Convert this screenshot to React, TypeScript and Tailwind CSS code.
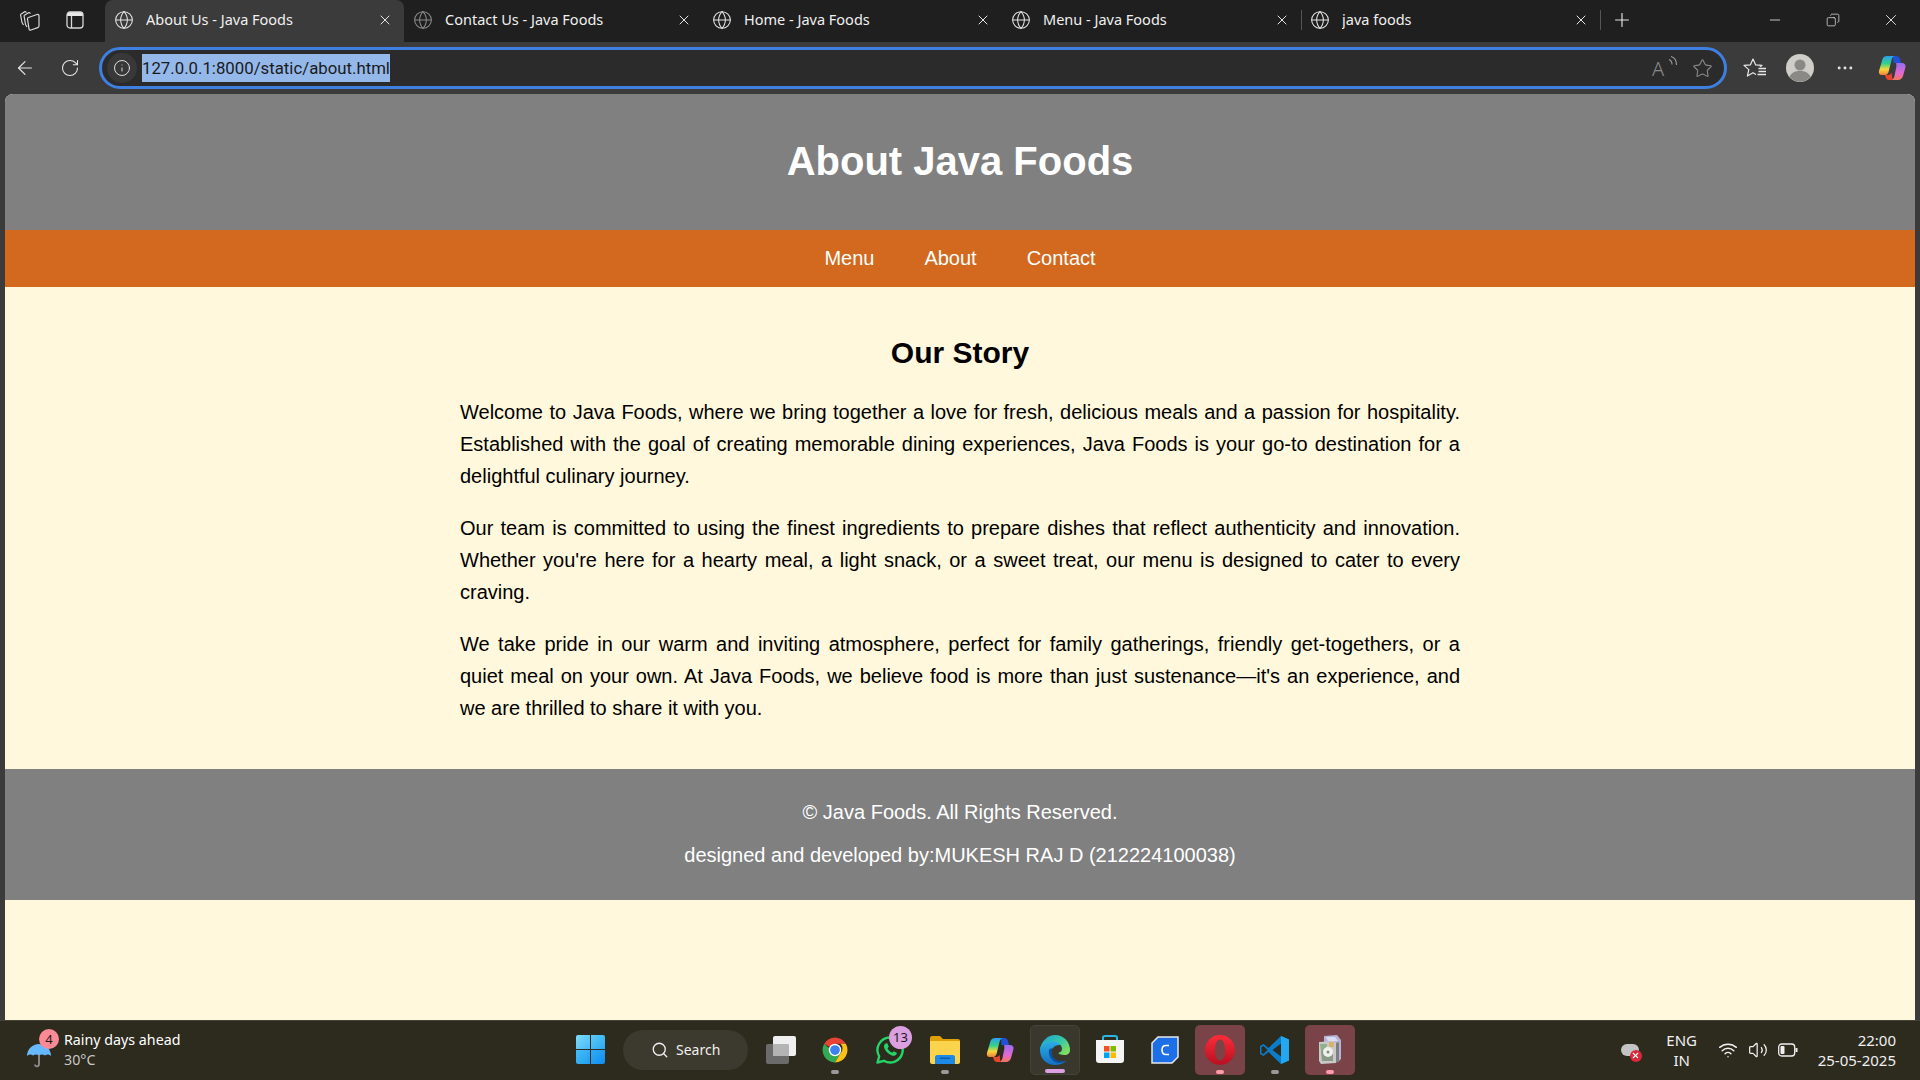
import { ArrowLeft, Globe, Info, Minus, Plus, RotateCw, Search, Star, Volume2, Wifi, X, MoreHorizontal, Copy } from 'lucide-react';

const segoe = { fontFamily: '"Noto Sans", sans-serif' };

const tabs = [
  { title: 'About Us - Java Foods', active: true },
  { title: 'Contact Us - Java Foods', dim: true },
  { title: 'Home - Java Foods' },
  { title: 'Menu - Java Foods' },
  { title: 'java foods', sep: true, sepRight: true },
];

const paragraphs = [
  'Welcome to Java Foods, where we bring together a love for fresh, delicious meals and a passion for hospitality. Established with the goal of creating memorable dining experiences, Java Foods is your go-to destination for a delightful culinary journey.',
  "Our team is committed to using the finest ingredients to prepare dishes that reflect authenticity and innovation. Whether you're here for a hearty meal, a light snack, or a sweet treat, our menu is designed to cater to every craving.",
  "We take pride in our warm and inviting atmosphere, perfect for family gatherings, friendly get-togethers, or a quiet meal on your own. At Java Foods, we believe food is more than just sustenance\u2014it's an experience, and we are thrilled to share it with you.",
];

const WorkspaceIcon = () => (
  <svg width="22" height="22" viewBox="0 0 22 22" fill="none" stroke="#d8d8d8" strokeWidth="1.2" strokeLinejoin="round">
    <path d="M1.500 5.500 6 2.500l1.500 1M1.500 5.500 3 13.500l1.500 2.500" />
    <path d="M5 6.500 10 3.500l1.500 1M5 6.500 6.500 15.500l1.500 2.500" />
    <path d="M9.500 8.500 18 5.500c1-.3 2 .2 2 1.300v10c0 1-.5 1.500-1.300 1.800l-6.700 2.400c-1 .3-1.800-.2-2-1.200L8.500 10c-.1-.7.300-1.300 1-1.500z" />
  </svg>
);

const TabViewIcon = () => (
  <svg width="18" height="18" viewBox="0 0 18 18" fill="none" stroke="#d8d8d8" strokeWidth="1.300">
    <path d="M1 5V3.500C1 2 2 1 3.500 1h11C16 1 17 2 17 3.500V5z" fill="#e8e8e8" stroke="none" />
    <rect x="1" y="1" width="16" height="16" rx="3" />
    <path d="M5.500 5v12" />
  </svg>
);

const ReadAloud = () => (
  <div className="relative w-[24px] h-[24px] text-[#8a8a8a]">
    <span className="absolute left-0 top-[1px] text-[20px] font-light leading-[24px]" style={segoe}>A</span>
    <svg className="absolute right-[-3px] top-0" width="11" height="13" viewBox="0 0 11 13" fill="none" stroke="#9a9a9a" strokeWidth="1.100">
      <path d="M1 3.500c2 .8 3 2.500 3 5M3 .5C6.500 1.500 8.500 4.500 8.500 9" />
    </svg>
  </div>
);

const FavoritesIcon = () => (
  <svg width="24" height="22" viewBox="0 0 24 22" fill="none" stroke="#e8e8e8" strokeWidth="1.200" strokeLinejoin="round">
    <path d="M10 2l2.600 5.800 6.400.6-4.800 4.200 1.400 6.400L10 15.700l-5.600 3.300 1.400-6.400L1 8.400l6.400-.6z" />
    <rect x="13" y="10" width="10" height="10" fill="#3b3b3b" stroke="none" />
    <path d="M15.500 11.500H23M15.500 14.500H23M14.500 17.500H23" strokeWidth="1.300" />
  </svg>
);

const Avatar = () => (
  <svg width="28" height="28" viewBox="0 0 28 28">
    <circle cx="14" cy="14" r="14" fill="#cfcdc8" />
    <circle cx="14" cy="11" r="5.500" fill="#8b8986" />
    <path d="M3.500 23c2-5 6-6 10.500-6s8.500 1 10.500 6a14 14 0 0 1-21 0z" fill="#8b8986" />
  </svg>
);

const CopilotIcon = ({ id = 'cp' }: { id?: string }) => (
  <svg width="28" height="28" viewBox="0 0 28 28">
    <defs>
      <linearGradient id={`${id}a`} x1="0" y1="0" x2="0" y2="1">
        <stop offset="0" stopColor="#2a9ff0" />
        <stop offset="0.4" stopColor="#35d08a" />
        <stop offset="0.7" stopColor="#f7d83a" />
        <stop offset="1" stopColor="#f0803a" />
      </linearGradient>
      <linearGradient id={`${id}b`} x1="0" y1="0" x2="0" y2="1">
        <stop offset="0" stopColor="#9a6cf0" />
        <stop offset="0.6" stopColor="#e468d0" />
        <stop offset="1" stopColor="#f2785a" />
      </linearGradient>
    </defs>
    <path d="M15 2h3c2 0 3.500 1 4 3l1 4h-7.500z" fill="#2350d8" />
    <path d="M9 2h7.500c-1.500.5-2.500 2-3 4l-3 12c-.4 1.500-1.500 3-3.500 3H3.500C1.500 21 .300 19 1 17L4.500 5C5.200 3 7 2 9 2z" fill={`url(#${id}a)`} />
    <path d="M18 9h6c2.500 0 4 2 3.500 4l-2.500 9c-.6 2-2.300 4-5 4h-7c2-.5 3-2 3.500-4l1.800-9c.3-1.800 0-3 -.3-4z" fill={`url(#${id}b)`} />
    <path d="M7 21h3.500c1.500-.2 2.500-1.200 3-2.500l1 7.500h-3.500c-2 0-3.500-2-4-5z" fill="#e8452f" />
  </svg>
);

const WinLogo = () => (
  <div className="grid grid-cols-2 gap-[1.500px] w-[29px] h-[29px]">
    <div className="bg-gradient-to-br from-[#7ddcfb] to-[#45b8f5] rounded-tl-[2px]" />
    <div className="bg-gradient-to-br from-[#5accf8] to-[#2aa8f5] rounded-tr-[2px]" />
    <div className="bg-gradient-to-br from-[#45bdf7] to-[#209ff0] rounded-bl-[2px]" />
    <div className="bg-gradient-to-br from-[#30abf7] to-[#0e8df0] rounded-br-[2px]" />
  </div>
);

const TaskView = () => (
  <div className="relative w-[30px] h-[28px]">
    <div className="absolute left-0 bottom-0 w-[23px] h-[20px] rounded-[2px] bg-[#6b6b6b]" />
    <div className="absolute right-0 top-0 w-[23px] h-[20px] rounded-[2px] bg-[#efefef]" />
    <div className="absolute left-[7px] top-[8px] w-[16px] h-[12px] rounded-[1px] bg-[#b4b4b4]" />
  </div>
);

const Chrome = () => (
  <svg width="30" height="30" viewBox="0 0 48 48">
    <path d="M24 24 6.700 14A20 20 0 0 1 41.300 14H24z" fill="#ea4335" />
    <path d="M6.700 14A20 20 0 0 0 24 44l8.700-15H24z" fill="#34a853" />
    <path d="M41.300 14A20 20 0 0 1 24 44l8.700-15a10 10 0 0 0 0-15z" fill="#fbc116" />
    <circle cx="24" cy="24" r="10" fill="#fff" />
    <circle cx="24" cy="24" r="7.800" fill="#3b82f0" />
  </svg>
);

const WhatsApp = () => (
  <svg width="30" height="30" viewBox="0 0 30 30" fill="none">
    <path d="M15 2.500A12.500 12.500 0 0 0 4.200 21.300L2.500 27.500l6.400-1.700A12.500 12.500 0 1 0 15 2.500z" stroke="#25d366" strokeWidth="2.400" strokeLinejoin="round" />
    <path d="M10.500 8.500c-1.500 1-2 2.800-1 5 1.300 3 3.700 5.500 6.800 6.800 2.200 1 4 .5 5-.8.600-.8.600-1.500.4-1.800l-3-1.500-1.400 1.600c-2-.8-3.800-2.500-4.800-4.600l1.300-1.400-1.300-3.200c-.8-.3-1.500-.4-2 0z" fill="#25d366" />
  </svg>
);

const Folder = () => (
  <svg width="30" height="28" viewBox="0 0 30 28">
    <path d="M0 2c0-1 .8-2 2-2h8l3 3h15c1 0 2 .8 2 2v3H0z" fill="#e0a008" />
    <path d="M0 5h30v21c0 1-.8 2-2 2H2c-1 0-2-.8-2-2z" fill="#fcd34d" />
    <path d="M5 21c0-1 1-2 2-2h16c1 0 2 1 2 2v7H5z" fill="#1e88e5" />
    <rect x="10" y="21.500" width="10" height="1.500" fill="#0d5ca8" />
  </svg>
);

const Edge = () => (
  <svg width="30" height="30" viewBox="0 0 30 30">
    <defs>
      <linearGradient id="edb" x1="0" y1="0" x2="0" y2="1">
        <stop offset="0" stopColor="#2bb0e6" />
        <stop offset="1" stopColor="#1470c4" />
      </linearGradient>
      <linearGradient id="edg" x1="0" y1="0" x2="1" y2="0.700">
        <stop offset="0" stopColor="#1f9fd8" />
        <stop offset="0.6" stopColor="#35c8a8" />
        <stop offset="1" stopColor="#7ee060" />
      </linearGradient>
    </defs>
    <path d="M0 15C0 24 7 30 15 30c4.500 0 8.500-1.500 11.500-4.500-4.500 2-9.500 1.500-12.500-1.500-3-3-3.500-8-1-11 2.500-3 6-3.500 9-2.500C19.500 7 16 5 12.500 5.500 6 6 0 9.500 0 15z" fill="url(#edb)" />
    <path d="M0 15C1 6 8 0 15 0c9 0 15 7 15 15 0 3-2 5-5.500 5-3 0-5.500-1-6.500-2 2.500-.5 4-2 4-4 0-4-4-7.500-9-7.500C7 6.500 2 9.500 0 15z" fill="url(#edg)" />
    <path d="M9 15c-1 6 3 12 9.500 13 2.500.3 5.500-.8 8-2.500-4.500 1.500-9 1-12-2-2.500-2.500-3.500-6-2-10.500C10.500 13.500 9.500 14 9 15z" fill="#0f4f9c" />
  </svg>
);

const Store = () => (
  <svg width="30" height="30" viewBox="0 0 30 30">
    <path d="M8 6V2.500C8 1.500 9 1 10 1h10c1 0 2 .5 2 1.500V6" fill="none" stroke="#2bb4e8" strokeWidth="2" />
    <path d="M1 5h28v20c0 2-1 3-3 3H4c-2 0-3-1-3-3z" fill="#f5f5f5" />
    <rect x="9" y="11" width="5.500" height="5.500" fill="#f25022" />
    <rect x="15.500" y="11" width="5.500" height="5.500" fill="#7fba00" />
    <rect x="9" y="17.500" width="5.500" height="5.500" fill="#00a4ef" />
    <rect x="15.500" y="17.500" width="5.500" height="5.500" fill="#ffb900" />
  </svg>
);

const CApp = () => (
  <svg width="28" height="28" viewBox="0 0 28 28">
    <path d="M7 1h20v20l-6 6H1V7z" fill="#1d6fe8" stroke="#e8e8e8" strokeWidth="1.500" />
    <path d="M18 9.500h-3c-2.500 0-4 2-4 4.500s1.500 4.500 4 4.500h3" fill="none" stroke="#fff" strokeWidth="1.600" />
  </svg>
);

const Opera = () => (
  <svg width="30" height="30" viewBox="0 0 30 30">
    <defs>
      <linearGradient id="opr" x1="0" y1="0" x2="0" y2="1">
        <stop offset="0" stopColor="#ff2d3a" />
        <stop offset="1" stopColor="#b80f20" />
      </linearGradient>
    </defs>
    <path fillRule="evenodd" d="M15 0a15 15 0 1 0 0 30 15 15 0 0 0 0-30zm0 4.500c3.200 0 5 4.500 5 10.500s-1.800 10.500-5 10.500-5-4.500-5-10.500 1.800-10.500 5-10.500z" fill="url(#opr)" />
  </svg>
);

const VsCode = () => (
  <svg width="30" height="30" viewBox="0 0 30 30">
    <path d="M21 1l8 3.500v21L21 29 8.500 17 3.500 21 0 19v-8l3.500-2 5 4z" fill="#0a7cc8" />
    <path d="M21 1l8 3.500v21L21 29z" fill="#22a7f0" />
    <path d="M21 8.500 12.500 15l8.500 6.500z" fill="#2d2a1e" />
    <path d="M3.500 11 1.500 12v6l2 1 4-4z" fill="#2d2a1e" />
  </svg>
);

const Installer = () => (
  <svg width="24" height="29" viewBox="0 0 24 29">
    <path d="M6 1l13-1 4 5v19l-3 3H6z" fill="#b4b4d8" />
    <path d="M8 2h9l3 4H10z" fill="#dcdcf0" />
    <path d="M1 7l15-1 2 2v20l-15 1-2-3z" fill="#c9c9c9" />
    <path d="M2 9h7l-1 7H3z" fill="#8fb08a" />
    <path d="M3 16h12v10H4z" fill="#8a9a86" />
    <circle cx="10" cy="17" r="5" fill="#f0f0ec" />
    <circle cx="10" cy="17" r="1.500" fill="#888" />
    <path d="M11 7h5v5h-5z" fill="#d8b070" />
    <path d="M18 8l3-1v19l-3 2z" fill="#7e7e7e" />
  </svg>
);

const taskIcons = [
  { key: 'chrome', node: <Chrome />, dot: 'w-[8px] bg-[#9a9a9a]' },
  { key: 'whatsapp', node: <WhatsApp />, badge: '13' },
  { key: 'folder', node: <Folder />, dot: 'w-[8px] bg-[#9a9a9a]' },
  { key: 'copilot', node: <CopilotIcon id="tb" /> },
  { key: 'edge', node: <Edge />, dot: 'w-[20px] bg-[#dda0e0]', box: 'bg-[#3a372c] border border-[#45423a]' },
  { key: 'store', node: <Store /> },
  { key: 'c', node: <CApp /> },
  { key: 'opera', node: <Opera />, dot: 'w-[8px] bg-[#ff9aa8]', box: 'bg-[#7a4347]' },
  { key: 'vscode', node: <VsCode />, dot: 'w-[8px] bg-[#9a9a9a]' },
  { key: 'installer', node: <Installer />, dot: 'w-[8px] bg-[#ff9aa8]', box: 'bg-[#7a4347]' },
];

export default function App() {
  return (
    <div className="w-[1920px] h-[1080px] overflow-hidden flex flex-col bg-[#3b3b3b]">
      {/* tab strip */}
      <div className="h-[42px] shrink-0 bg-[#1f1f1f] flex items-end text-[#f0f0f0] text-[14.500px]" style={segoe}>
        <div className="w-[105px] h-[42px] pb-[2px] flex items-center shrink-0">
          <div className="w-[60px] flex justify-center"><WorkspaceIcon /></div>
          <div className="w-[30px] flex justify-center"><TabViewIcon /></div>
        </div>
        {tabs.map((t) => (
          <div
            key={t.title}
            className={`relative w-[299px] h-[42px] pb-[2px] flex items-center pl-[9px] pr-[11px] ${t.active ? 'bg-[#3b3b3b] rounded-t-[8px]' : ''}`}
          >
            {t.sep && <div className="absolute left-0 top-[10px] h-[20px] w-px bg-[#555]" />}
            {t.sepRight && <div className="absolute right-[-1px] top-[10px] h-[20px] w-px bg-[#555]" />}
            <Globe size={20} strokeWidth={1.25} className={t.dim ? 'text-[#8a8a8a]' : 'text-[#e6e6e6]'} />
            <span className="ml-[12px] flex-1 truncate">{t.title}</span>
            <X size={16} strokeWidth={1.5} className="text-[#e6e6e6]" />
          </div>
        ))}
        <div className="h-[42px] w-[44px] pb-[2px] flex items-center justify-center">
          <Plus size={22} strokeWidth={1.25} className="text-[#e6e6e6]" />
        </div>
        <div className="ml-auto h-[42px] pb-[2px] flex items-center text-[#e6e6e6]">
          <div className="w-[58px] flex justify-center"><Minus size={16} strokeWidth={1.25} /></div>
          <div className="w-[58px] flex justify-center"><Copy size={14} strokeWidth={1.25} className="-scale-x-100" /></div>
          <div className="w-[58px] flex justify-center"><X size={18} strokeWidth={1.25} /></div>
        </div>
      </div>

      {/* address bar row */}
      <div className="h-[52px] shrink-0 flex items-center text-[#e8e8e8]">
        <div className="w-[99px] flex items-center shrink-0">
          <div className="w-[50px] flex justify-center"><ArrowLeft size={22} strokeWidth={1.25} /></div>
          <div className="w-[40px] flex justify-center"><RotateCw size={20} strokeWidth={1.25} /></div>
        </div>
        <div className="w-[1628px] shrink-0 h-[42px] rounded-full border-[3px] border-[#3f7fe0] bg-[#2b2b2b] flex items-center pl-[5px] pr-[11px]">
          <div className="w-[30px] h-[30px] rounded-full bg-[#383838] flex items-center justify-center shrink-0">
            <Info size={18} strokeWidth={1.25} />
          </div>
          <span className="ml-[5px] h-[28px] bg-[#94b8ea] text-[#1a1a1a] text-[16.800px] leading-[28px]" style={{ fontFamily: 'Roboto, sans-serif' }}>
            127.0.0.1:8000/static/about.html
          </span>
          <div className="ml-auto flex items-center gap-[16px]">
            <ReadAloud />
            <Star size={21} strokeWidth={1.25} className="text-[#8a8a8a]" />
          </div>
        </div>
        <div className="flex items-center pl-[5px]">
          <div className="w-[45px] flex justify-center"><FavoritesIcon /></div>
          <div className="w-[45px] flex justify-center"><Avatar /></div>
          <div className="w-[45px] flex justify-center"><MoreHorizontal size={20} strokeWidth={1.5} /></div>
          <div className="w-[50px] flex justify-center"><CopilotIcon /></div>
        </div>
      </div>

      {/* page */}
      <div className="h-[926px] shrink-0 mx-[5px] rounded-t-[8px] overflow-hidden bg-[#fff8dc] text-black" style={{ fontFamily: '"Liberation Sans", sans-serif' }}>
        <header className="h-[136px] pb-[2px] bg-[#808080] flex items-center justify-center">
          <h1 className="text-[40px] font-bold text-white">About Java Foods</h1>
        </header>
        <nav className="h-[57px] pb-[2px] bg-[#d2691e] flex items-center justify-center gap-[50px] text-[20px] text-white">
          <a>Menu</a>
          <a>About</a>
          <a>Contact</a>
        </nav>
        <main className="w-[1000px] mx-auto pt-[45px] pb-[25px] h-[482px]">
          <h2 className="text-[30px] font-bold text-center leading-[42px] mb-[22px]">Our Story</h2>
          <div className="flex flex-col gap-[20px] text-[20px] leading-[32px] text-justify">
            {paragraphs.map((p) => (
              <p key={p.slice(0, 12)}>{p}</p>
            ))}
          </div>
        </main>
        <footer className="h-[131px] bg-[#808080] text-white text-[20px] leading-[32px] flex flex-col items-center pt-[27px] gap-[11px]">
          <p>© Java Foods. All Rights Reserved.</p>
          <p>designed and developed by:MUKESH RAJ D (212224100038)</p>
        </footer>
      </div>

      {/* windows taskbar */}
      <div className="h-[60px] shrink-0 pb-[2px] bg-[#2d2a1e] border-t border-[#45423a] flex items-center text-white" style={segoe}>
        <div className="w-[572px] shrink-0 flex items-center pl-[26px]">
          <div className="relative w-[38px] h-[40px]">
            <svg className="absolute left-0 top-[14px]" width="26" height="26" viewBox="0 0 26 26" fill="none">
              <path d="M1 12A12 12 0 0 1 25 12c-2-2-4-2-6-.5-2-1.500-4-1.500-6 0-2-1.500-4-1.500-6 0-2-1.500-4-1.500-6 .5z" fill="#66b8ff" />
              <path d="M13 11v9c0 3-4 3-4 .5" stroke="#8f8f8f" strokeWidth="1.800" />
            </svg>
            <div className="absolute left-[13px] top-[-1px] w-[20px] h-[20px] rounded-full bg-[#fb8a96] text-[#1a1a1a] text-[13px] leading-[20px] text-center">4</div>
          </div>
          <div className="text-[14.250px] leading-[20px]">
            <div>Rainy days ahead</div>
            <div className="text-[#c8c8c8]">30°C</div>
          </div>
        </div>
        <div className="flex items-center">
          <div className="w-[51px] flex justify-start pl-[4px]"><WinLogo /></div>
          <div className="w-[125px] h-[40px] rounded-full bg-[#3c3a2e] flex items-center pl-[28px] gap-[7px] text-[14px] text-[#f0f0f0]">
            <Search size={18} strokeWidth={1.75} />
            <span>Search</span>
          </div>
          <div className="w-[59px] ml-[3px] flex justify-center"><TaskView /></div>
          {taskIcons.map((i) => (
            <div key={i.key} className={`relative w-[50px] h-[50px] mr-[5px] rounded-[5px] flex items-center justify-center ${i.box ?? ''}`}>
              {i.node}
              {i.badge && (
                <div className="absolute right-[3px] top-[1px] w-[23px] h-[23px] rounded-full bg-[#dca0e0] text-[#1a1a1a] text-[13px] leading-[23px] text-center">{i.badge}</div>
              )}
              {i.dot && <div className={`absolute bottom-[1px] left-1/2 -translate-x-1/2 h-[4px] rounded-full ${i.dot}`} />}
            </div>
          ))}
        </div>
        <div className="ml-auto flex items-center pr-[24px] text-[15px] text-[#f0f0f0]">
          <div className="relative w-[20px] h-[20px] mr-[23px]">
            <div className="absolute left-0 top-[4px] w-[18px] h-[12px] rounded-full bg-[#c4c4c4]" />
            <div className="absolute right-[-1px] bottom-[-2px] w-[12px] h-[12px] rounded-full bg-[#d8283c] flex items-center justify-center">
              <X size={9} strokeWidth={3} className="text-white" />
            </div>
          </div>
          <div className="text-center leading-[20px] w-[36px] mr-[18px]">
            <div>ENG</div>
            <div>IN</div>
          </div>
          <Wifi size={20} strokeWidth={1.75} className="mr-[10px]" />
          <Volume2 size={20} strokeWidth={1.5} className="mr-[10px]" />
          <svg className="mr-[20px]" width="20" height="14" viewBox="0 0 20 14" fill="none" stroke="#f0f0f0" strokeWidth="1.300">
            <rect x="0.700" y="1" width="16" height="12" rx="3" />
            <path d="M18.500 5v4" strokeWidth="2" />
            <rect x="2.500" y="3" width="4" height="8" rx="1" fill="#f0f0f0" stroke="none" />
          </svg>
          <div className="text-right leading-[20px]">
            <div>22:00</div>
            <div>25-05-2025</div>
          </div>
        </div>
      </div>
    </div>
  );
}
